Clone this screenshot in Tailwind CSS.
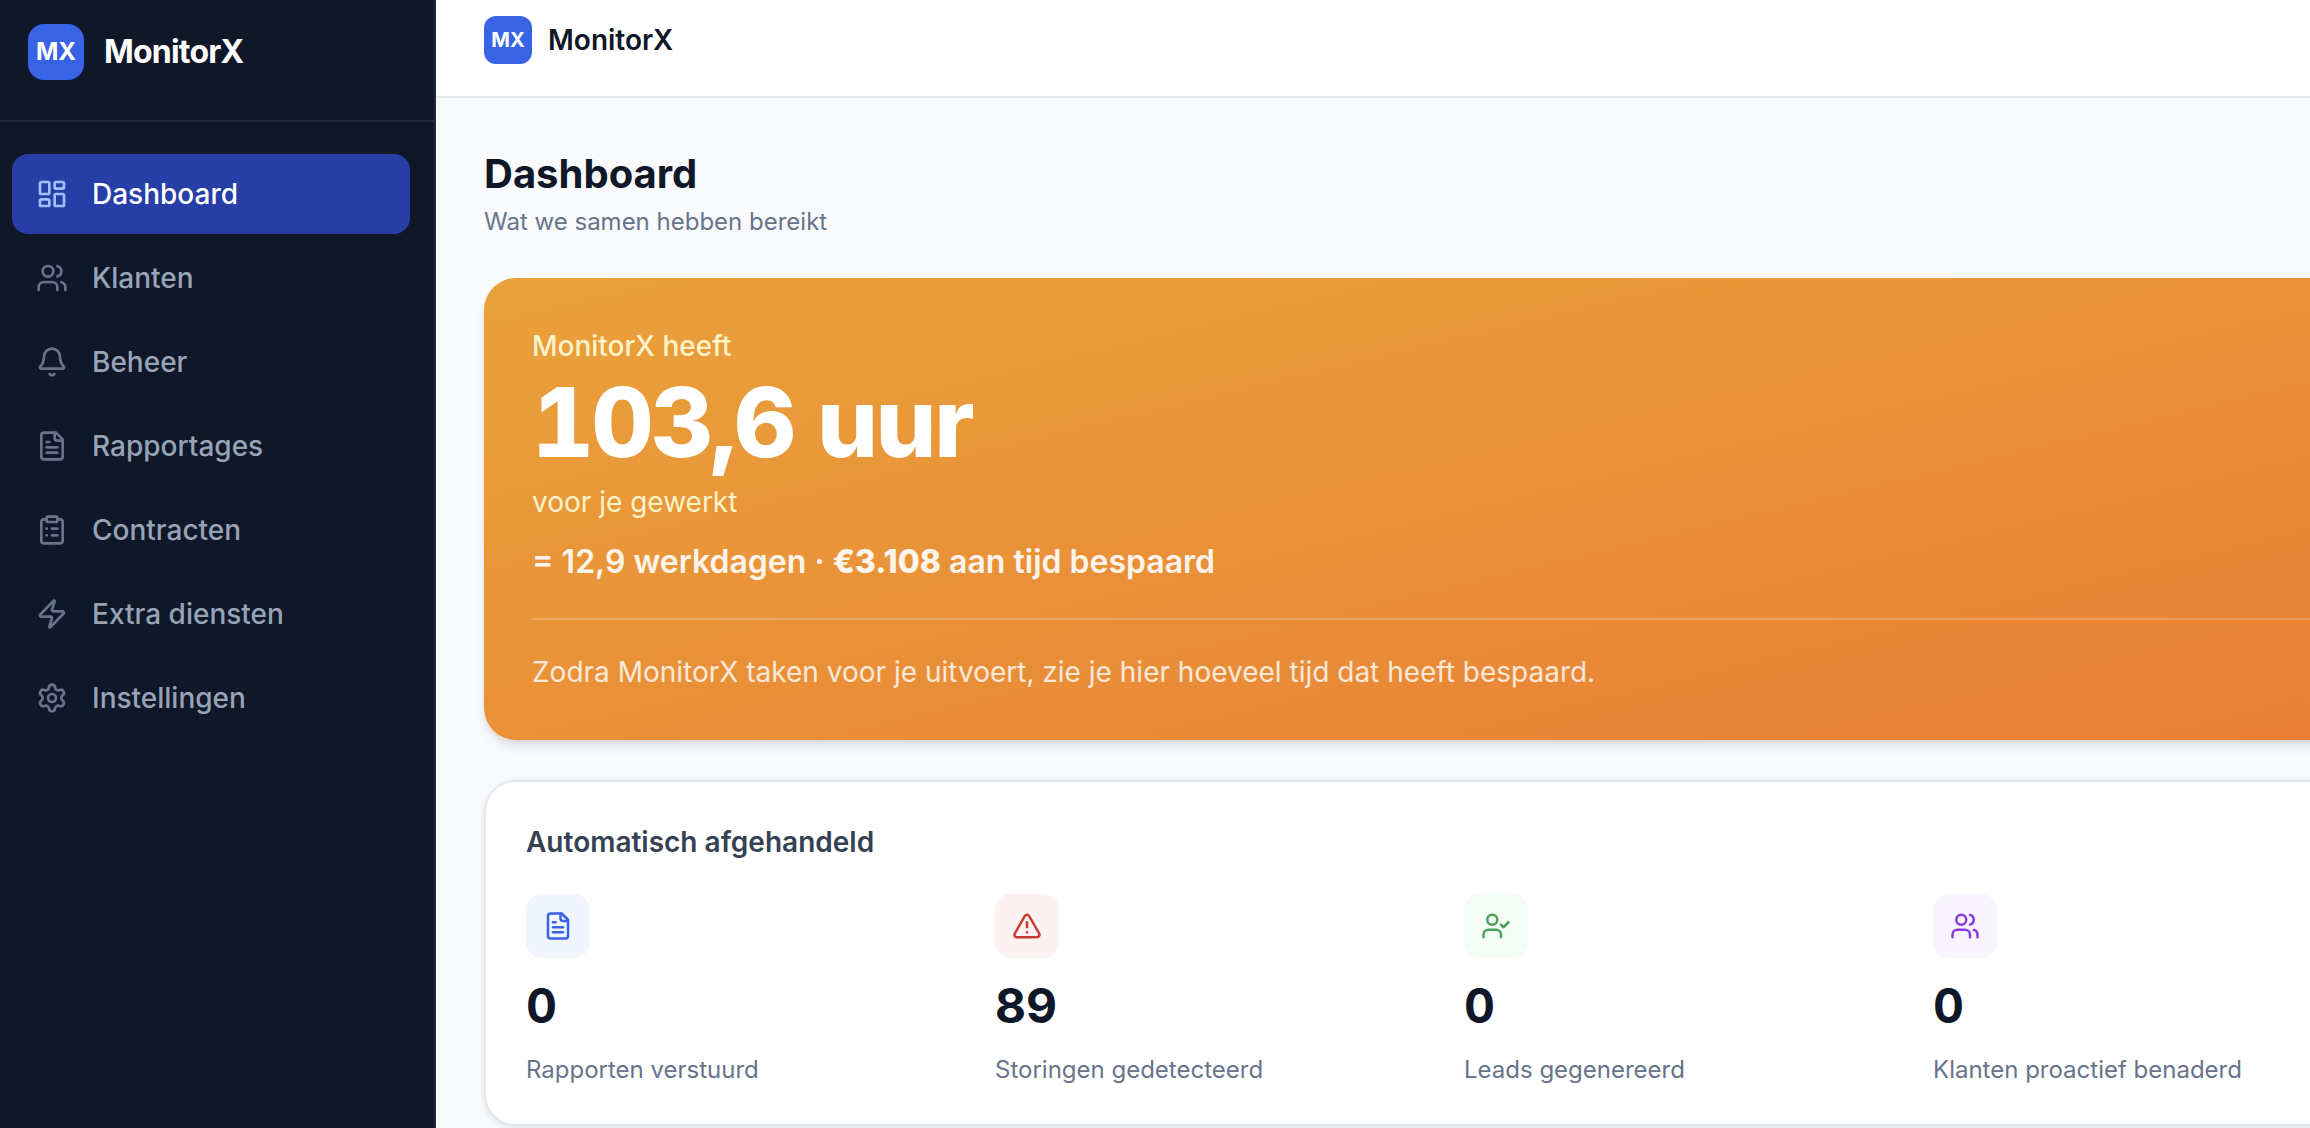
<!DOCTYPE html>
<html lang="nl">
<head>
<meta charset="utf-8">
<title>MonitorX – Dashboard</title>
<script src="https://cdn.jsdelivr.net/npm/@tailwindcss/browser@4"></script>
</head>
<body class="font-['Inter',sans-serif] antialiased bg-[#f9fafc] text-[#101728] overflow-hidden">
<div class="flex h-screen overflow-hidden">

  <aside class="w-[436px] shrink-0 bg-[#101729] border-r-2 border-[#1f2b3a]">
    <div class="flex items-center gap-5 px-7 pt-6 pb-10 border-b-2 border-[#1f2b3a]">
      <div class="size-14 rounded-2xl bg-[#3863e4] text-white text-[24px] font-bold flex items-center justify-center">MX</div>
      <span class="text-white text-[32px] leading-[48px] font-bold tracking-tight">MonitorX</span>
    </div>
    <nav class="flex flex-col gap-1 pt-8 pl-3 pr-6 text-[28px] leading-10 font-medium text-[#97a3b6]">
      <a href="#" class="flex items-center gap-6 h-20 px-6 rounded-2xl bg-[#273ea6] text-white">
        <svg class="size-8 text-[#9dc2f9]" viewBox="0 0 24 24" fill="none" stroke="currentColor" stroke-width="2" stroke-linecap="round" stroke-linejoin="round"><rect width="7" height="9" x="3" y="3" rx="1"/><rect width="7" height="5" x="14" y="3" rx="1"/><rect width="7" height="9" x="14" y="12" rx="1"/><rect width="7" height="5" x="3" y="16" rx="1"/></svg>
        Dashboard
      </a>
      <a href="#" class="flex items-center gap-6 h-20 px-6 rounded-2xl">
        <svg class="size-8 text-[#67748a]" viewBox="0 0 24 24" fill="none" stroke="currentColor" stroke-width="2" stroke-linecap="round" stroke-linejoin="round"><path d="M16 21v-2a4 4 0 0 0-4-4H6a4 4 0 0 0-4 4v2"/><circle cx="9" cy="7" r="4"/><path d="M22 21v-2a4 4 0 0 0-3-3.87"/><path d="M16 3.13a4 4 0 0 1 0 7.75"/></svg>
        Klanten
      </a>
      <a href="#" class="flex items-center gap-6 h-20 px-6 rounded-2xl">
        <svg class="size-8 text-[#67748a]" viewBox="0 0 24 24" fill="none" stroke="currentColor" stroke-width="2" stroke-linecap="round" stroke-linejoin="round"><path d="M10.268 21a2 2 0 0 0 3.464 0"/><path d="M3.262 15.326A1 1 0 0 0 4 17h16a1 1 0 0 0 .74-1.673C19.41 13.956 18 12.499 18 8A6 6 0 0 0 6 8c0 4.499-1.411 5.956-2.738 7.326"/></svg>
        Beheer
      </a>
      <a href="#" class="flex items-center gap-6 h-20 px-6 rounded-2xl">
        <svg class="size-8 text-[#67748a]" viewBox="0 0 24 24" fill="none" stroke="currentColor" stroke-width="2" stroke-linecap="round" stroke-linejoin="round"><path d="M15 2H6a2 2 0 0 0-2 2v16a2 2 0 0 0 2 2h12a2 2 0 0 0 2-2V7Z"/><path d="M14 2v4a2 2 0 0 0 2 2h4"/><path d="M10 9H8"/><path d="M16 13H8"/><path d="M16 17H8"/></svg>
        Rapportages
      </a>
      <a href="#" class="flex items-center gap-6 h-20 px-6 rounded-2xl">
        <svg class="size-8 text-[#67748a]" viewBox="0 0 24 24" fill="none" stroke="currentColor" stroke-width="2" stroke-linecap="round" stroke-linejoin="round"><rect width="8" height="4" x="8" y="2" rx="1"/><path d="M16 4h2a2 2 0 0 1 2 2v14a2 2 0 0 1-2 2H6a2 2 0 0 1-2-2V6a2 2 0 0 1 2-2h2"/><path d="M12 11h4"/><path d="M12 16h4"/><path d="M8 11h.01"/><path d="M8 16h.01"/></svg>
        Contracten
      </a>
      <a href="#" class="flex items-center gap-6 h-20 px-6 rounded-2xl">
        <svg class="size-8 text-[#67748a]" viewBox="0 0 24 24" fill="none" stroke="currentColor" stroke-width="2" stroke-linecap="round" stroke-linejoin="round"><path d="M4 14a1 1 0 0 1-.78-1.63l9.9-10.2a.5.5 0 0 1 .86.46l-1.92 6.02A1 1 0 0 0 13 10h7a1 1 0 0 1 .78 1.63l-9.9 10.2a.5.5 0 0 1-.86-.46l1.92-6.02A1 1 0 0 0 11 14z"/></svg>
        Extra diensten
      </a>
      <a href="#" class="flex items-center gap-6 h-20 px-6 rounded-2xl">
        <svg class="size-8 text-[#67748a]" viewBox="0 0 24 24" fill="none" stroke="currentColor" stroke-width="2" stroke-linecap="round" stroke-linejoin="round"><path d="M9.671 4.136a2.34 2.34 0 0 1 4.659 0 2.34 2.34 0 0 0 3.319 1.915 2.34 2.34 0 0 1 2.33 4.033 2.34 2.34 0 0 0 0 3.831 2.34 2.34 0 0 1-2.33 4.033 2.34 2.34 0 0 0-3.319 1.915 2.34 2.34 0 0 1-4.659 0 2.34 2.34 0 0 0-3.32-1.915 2.34 2.34 0 0 1-2.33-4.033 2.34 2.34 0 0 0 0-3.831A2.34 2.34 0 0 1 6.35 6.051a2.34 2.34 0 0 0 3.319-1.915"/><circle cx="12" cy="12" r="3"/></svg>
        Instellingen
      </a>
    </nav>
  </aside>

  <div class="flex-1 min-w-0">
    <header class="flex items-center gap-4 px-12 pt-4 pb-8 bg-white border-b-2 border-[#e3e8ef]">
      <div class="size-12 rounded-xl bg-[#3863e4] text-white text-[20px] font-bold flex items-center justify-center">MX</div>
      <span class="text-[28px] leading-10 font-semibold">MonitorX</span>
    </header>

    <!-- The content column runs on past the right edge of the window -->
    <main class="pt-12 pl-12 -mr-[102px]">
      <h1 class="text-[40px] leading-[56px] font-bold">Dashboard</h1>
      <p class="mt-1 text-[24px] leading-8 text-[#67748b]">Wat we samen hebben bereikt</p>

      <section class="mt-10 p-12 rounded-[32px] bg-linear-to-br/srgb from-[#e9a23b] to-[#e97e35] shadow-[0_8px_12px_-2px_rgba(0,0,0,0.1),0_4px_8px_-4px_rgba(0,0,0,0.1)] text-[28px] leading-10">
        <p class="font-medium text-[#fdf3c9]">MonitorX heeft</p>
        <p class="mt-2 text-[96px] leading-none font-extrabold tracking-tight tabular-nums text-white">103,6 uur</p>
        <p class="mt-3 text-[#fdf3c9]">voor je gewerkt</p>
        <p class="mt-4 text-[32px] leading-[48px] font-semibold text-white/90">= 12,9 werkdagen · <strong class="font-extrabold">€3.108</strong> aan tijd bespaard</p>
        <p class="mt-8 pt-8 border-t-2 border-white/20 text-white/80">Zodra MonitorX taken voor je uitvoert, zie je hier hoeveel tijd dat heeft bespaard.</p>
      </section>

      <section class="mt-10 px-10 pt-10 pb-[38px] rounded-[32px] bg-white border-2 border-[#e3e8ef] shadow-[0_2px_6px_rgba(0,0,0,0.1)]">
        <h2 class="text-[28px] leading-10 font-semibold text-[#364153]">Automatisch afgehandeld</h2>
        <div class="mt-8 grid grid-cols-4 gap-8">
          <div>
            <div class="size-16 rounded-2xl bg-[#f0f5fe] text-[#3863e4] flex items-center justify-center">
              <svg class="size-[30px]" viewBox="0 0 24 24" fill="none" stroke="currentColor" stroke-width="2" stroke-linecap="round" stroke-linejoin="round"><path d="M15 2H6a2 2 0 0 0-2 2v16a2 2 0 0 0 2 2h12a2 2 0 0 0 2-2V7Z"/><path d="M14 2v4a2 2 0 0 0 2 2h4"/><path d="M10 9H8"/><path d="M16 13H8"/><path d="M16 17H8"/></svg>
            </div>
            <p class="mt-4 text-[48px] leading-[64px] font-bold tabular-nums">0</p>
            <p class="mt-4 text-[24px] leading-8 text-[#67748b]">Rapporten verstuurd</p>
          </div>
          <div>
            <div class="size-16 rounded-2xl bg-[#fcf2f2] text-[#cb3a31] flex items-center justify-center">
              <svg class="size-[30px]" viewBox="0 0 24 24" fill="none" stroke="currentColor" stroke-width="2" stroke-linecap="round" stroke-linejoin="round"><path d="m21.73 18-8-14a2 2 0 0 0-3.48 0l-8 14A2 2 0 0 0 4 21h16a2 2 0 0 0 1.73-3"/><path d="M12 9v4"/><path d="M12 17h.01"/></svg>
            </div>
            <p class="mt-4 text-[48px] leading-[64px] font-bold tabular-nums">89</p>
            <p class="mt-4 text-[24px] leading-8 text-[#67748b]">Storingen gedetecteerd</p>
          </div>
          <div>
            <div class="size-16 rounded-2xl bg-[#f3fcf5] text-[#4ba154] flex items-center justify-center">
              <svg class="size-[30px]" viewBox="0 0 24 24" fill="none" stroke="currentColor" stroke-width="2" stroke-linecap="round" stroke-linejoin="round"><path d="m16 11 2 2 4-4"/><path d="M16 21v-2a4 4 0 0 0-4-4H6a4 4 0 0 0-4 4v2"/><circle cx="9" cy="7" r="4"/></svg>
            </div>
            <p class="mt-4 text-[48px] leading-[64px] font-bold tabular-nums">0</p>
            <p class="mt-4 text-[24px] leading-8 text-[#67748b]">Leads gegenereerd</p>
          </div>
          <div>
            <div class="size-16 rounded-2xl bg-[#f8f5fe] text-[#8a3be3] flex items-center justify-center">
              <svg class="size-[30px]" viewBox="0 0 24 24" fill="none" stroke="currentColor" stroke-width="2" stroke-linecap="round" stroke-linejoin="round"><path d="M16 21v-2a4 4 0 0 0-4-4H6a4 4 0 0 0-4 4v2"/><circle cx="9" cy="7" r="4"/><path d="M22 21v-2a4 4 0 0 0-3-3.87"/><path d="M16 3.13a4 4 0 0 1 0 7.75"/></svg>
            </div>
            <p class="mt-4 text-[48px] leading-[64px] font-bold tabular-nums">0</p>
            <p class="mt-4 text-[24px] leading-8 text-[#67748b]">Klanten proactief benaderd</p>
          </div>
        </div>
      </section>
    </main>
  </div>
</div>
</body>
</html>
